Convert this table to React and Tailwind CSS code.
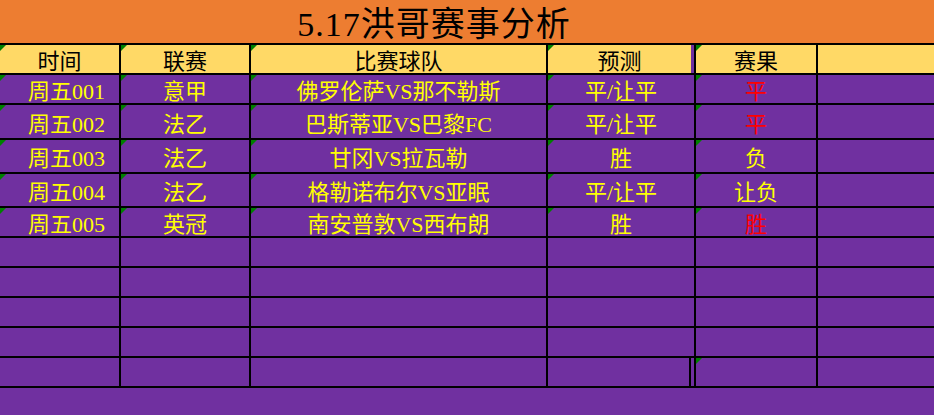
const font = "font-['Liberation_Serif','Noto_Sans_CJK_SC',serif]";

const headers = ["时间", "联赛", "比赛球队", "预测", "赛果", ""];

const matches = [
  { time: "周五001", league: "意甲", teams: "佛罗伦萨VS那不勒斯", pick: "平/让平", result: "平", hit: true },
  { time: "周五002", league: "法乙", teams: "巴斯蒂亚VS巴黎FC", pick: "平/让平", result: "平", hit: true },
  { time: "周五003", league: "法乙", teams: "甘冈VS拉瓦勒", pick: "胜", result: "负", hit: false },
  { time: "周五004", league: "法乙", teams: "格勒诺布尔VS亚眠", pick: "平/让平", result: "让负", hit: false },
  { time: "周五005", league: "英冠", teams: "南安普敦VS西布朗", pick: "胜", result: "胜", hit: true },
];

function Cell({ children, className = "", tri = false }) {
  return (
    <div className={`relative flex items-center justify-center pt-[6px] ${className}`}>
      {tri && (
        <span className="absolute left-0 top-0 h-0 w-0 border-t-[6px] border-r-[6px] border-t-[#008000] border-r-transparent" />
      )}
      {children}
    </div>
  );
}

export default function App() {
  return (
    <div className={`w-[934px] h-[415px] overflow-hidden bg-[#7030A0] ${font} leading-none`}>
      {/* Title */}
      <div className="h-[45px] bg-[#ED7D31] border-b-2 border-black flex items-center">
        <div className="w-[868px] text-center text-[34px] tracking-[1px] text-black pt-[6px]">5.17洪哥赛事分析</div>
      </div>

      <div className="grid grid-cols-[119px_128px_295px_146px_120px_1fr] grid-rows-[28px_28px_33px_32px_32px_28px_28px_28px_28px_28px_28px] gap-[2px] bg-black border-b-2 border-black text-[22px]">
        {headers.map((h, i) => (
          <Cell
            key={h + i}
            tri={i < 5}
            className={i === 3 ? "bg-[#FFD966] text-black border-r-[3px] border-[#7030A0]" : "bg-[#FFD966] text-black"}
          >
            {h}
          </Cell>
        ))}

        {matches.map((m) => (
          <div key={m.time} className="contents">
            <Cell tri className="bg-[#7030A0] text-[#FFFF00] pl-[14px]">{m.time}</Cell>
            <Cell tri className="bg-[#7030A0] text-[#FFFF00]">{m.league}</Cell>
            <Cell tri className="bg-[#7030A0] text-[#FFFF00]">{m.teams}</Cell>
            <Cell tri className="bg-[#7030A0] text-[#FFFF00]">{m.pick}</Cell>
            <Cell tri className={`bg-[#7030A0] ${m.hit ? "text-[#FF0000]" : "text-[#FFFF00]"}`}>{m.result}</Cell>
            <Cell className="bg-[#7030A0]" />
          </div>
        ))}

        {[0, 1, 2, 3, 4].map((r) => (
          <div key={r} className="contents">
            <Cell className="bg-[#7030A0]" />
            <Cell className="bg-[#7030A0]" />
            <Cell className="bg-[#7030A0]" />
            <div className="bg-[#7030A0] flex justify-end">
              {r === 4 && <div className="h-full w-[5px] border-l-2 border-black" />}
            </div>
            <Cell tri={r === 4} className="bg-[#7030A0]" />
            <Cell className="bg-[#7030A0]" />
          </div>
        ))}
      </div>
    </div>
  );
}
